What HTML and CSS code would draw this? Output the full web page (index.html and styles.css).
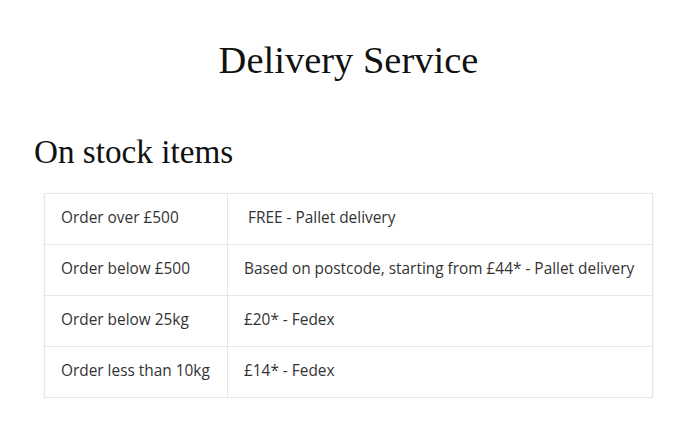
FILE: index.html
```html
<!DOCTYPE html>
<html>
<head>
<meta charset="utf-8">
<link rel="stylesheet" href="styles.css">
</head>
<body>
<div class="page">
  <h1 class="title">Delivery Service</h1>
  <h2 class="section">On stock items</h2>
  <table class="rates">
    <tr><td class="c1">Order over £500</td><td class="c2">&nbsp;FREE - Pallet delivery</td></tr>
    <tr><td class="c1">Order below £500</td><td class="c2">Based on postcode, starting from £44* - Pallet delivery</td></tr>
    <tr><td class="c1">Order below 25kg</td><td class="c2">£20* - Fedex</td></tr>
    <tr><td class="c1">Order less than 10kg</td><td class="c2">£14* - Fedex</td></tr>
  </table>
</div>
</body>
</html>
```
FILE: styles.css
```css
html, body { margin: 0; padding: 0; background: #fff; }
.page { padding: 0 26px 0 34px; }
.title {
  margin: 0;
  padding: 36px 0 0 10px;
  height: 96px;
  box-sizing: border-box;
  text-align: center;
  font-family: "Liberation Serif", serif;
  font-weight: normal;
  font-size: 38.5px;
  line-height: 48px;
  color: #111;
}
.section {
  margin: 0;
  padding-top: 36px;
  height: 97px;
  box-sizing: border-box;
  font-family: "Liberation Serif", serif;
  font-weight: normal;
  font-size: 33.2px;
  line-height: 40px;
  color: #111;
}
.rates {
  margin-left: 10px;
  width: 609px;
  table-layout: fixed;
  border-collapse: collapse;
  box-shadow: 0 1px 2px rgba(0,0,0,0.08);
  font-family: "Open Sans", sans-serif;
  font-size: 15.4px;
  color: #333;
}
.rates td {
  border: 1px solid #e6e6e6;
  height: 51px;
  box-sizing: border-box;
  padding: 0 0 3px 16px;
  white-space: nowrap;
  vertical-align: middle;
}
.rates .c1 { width: 183px; }
```
